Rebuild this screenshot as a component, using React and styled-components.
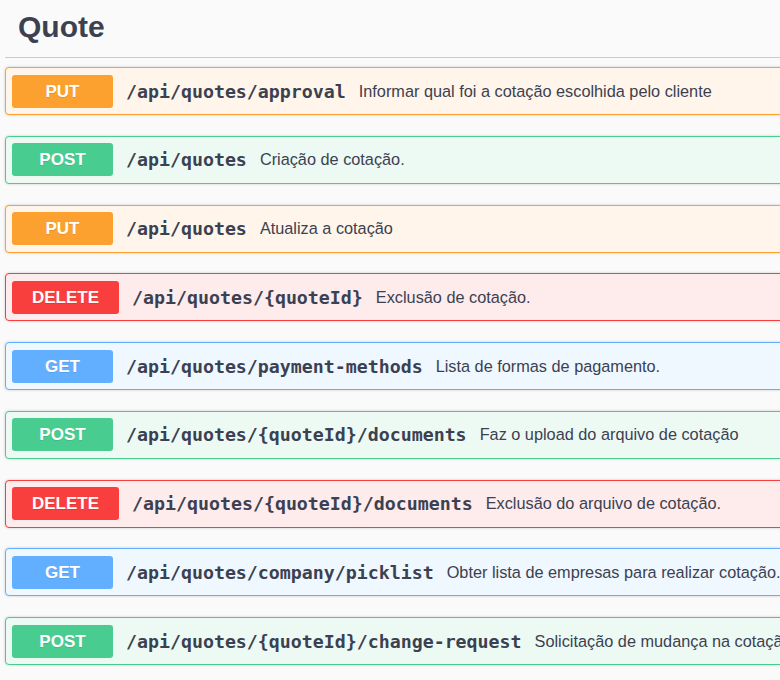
import React from 'react'
import styled, { createGlobalStyle } from 'styled-components'

const operations = [
  { method: 'put', path: '/api/quotes/approval', summary: 'Informar qual foi a cotação escolhida pelo cliente' },
  { method: 'post', path: '/api/quotes', summary: 'Criação de cotação.' },
  { method: 'put', path: '/api/quotes', summary: 'Atualiza a cotação' },
  { method: 'delete', path: '/api/quotes/{quoteId}', summary: 'Exclusão de cotação.' },
  { method: 'get', path: '/api/quotes/payment-methods', summary: 'Lista de formas de pagamento.' },
  { method: 'post', path: '/api/quotes/{quoteId}/documents', summary: 'Faz o upload do arquivo de cotação' },
  { method: 'delete', path: '/api/quotes/{quoteId}/documents', summary: 'Exclusão do arquivo de cotação.' },
  { method: 'get', path: '/api/quotes/company/picklist', summary: 'Obter lista de empresas para realizar cotação.' },
  { method: 'post', path: '/api/quotes/{quoteId}/change-request', summary: 'Solicitação de mudança na cotação' },
]

const colors = {
  put: { main: '#fca130', bg: '#fff5ea' },
  post: { main: '#49cc90', bg: '#edfaf4' },
  delete: { main: '#f93e3e', bg: '#feebeb' },
  get: { main: '#61affe', bg: '#eff7ff' },
}

export default function App() {
  return (
    <>
      <GlobalStyle />
      <Page>
        <TagSection>
          <TagTitle>Quote</TagTitle>
          {operations.map((op, i) => (
            <OpBlock key={i} $method={op.method}>
              <Method $method={op.method}>{op.method.toUpperCase()}</Method>
              <Path>{op.path}</Path>
              <Summary>{op.summary}</Summary>
            </OpBlock>
          ))}
        </TagSection>
      </Page>
    </>
  )
}

///////////////////////////////////////////////////////////////////////////////////

const GlobalStyle = createGlobalStyle`
  html, body {
    margin: 0;
    padding: 0;
    background: #fafafa;
    overflow: hidden;
  }
  * { box-sizing: border-box; }
`

///////////////////////////////////////////////////////////////////////////////////

const Page = styled.div`
  width: 900px;
  padding: 0 0 0 5px;
  font-family: 'Liberation Sans', Arial, sans-serif;
  color: #3b4151;
`

///////////////////////////////////////////////////////////////////////////////////

const TagSection = styled.div`
  display: flex;
  flex-direction: column;
`

///////////////////////////////////////////////////////////////////////////////////

const TagTitle = styled.h3`
  margin: 0 0 9px;
  padding: 10px 20px 13px 13px;
  border-bottom: 1px solid #c9cbd0;
  font-size: 30px;
  font-weight: 700;
  line-height: 34px;
  color: #3b4151;
`

///////////////////////////////////////////////////////////////////////////////////

const OpBlock = styled.div`
  display: flex;
  align-items: center;
  height: 48px;
  margin-bottom: 20.75px;
  padding: 0 6px;
  border: 1px solid ${(p) => colors[p.$method].main};
  border-radius: 4px;
  background: ${(p) => colors[p.$method].bg};
  box-shadow: 0 0 3px rgba(0, 0, 0, 0.19);
  white-space: nowrap;
`

///////////////////////////////////////////////////////////////////////////////////

const Method = styled.span`
  flex-shrink: 0;
  min-width: 101px;
  height: 33px;
  padding: 0 20px;
  border-radius: 3px;
  background: ${(p) => colors[p.$method].main};
  color: #fff;
  font-size: 17px;
  font-weight: 700;
  line-height: 33px;
  text-align: center;
  text-shadow: 0 1px 0 rgba(0, 0, 0, 0.1);
`

///////////////////////////////////////////////////////////////////////////////////

const Path = styled.span`
  flex-shrink: 0;
  padding: 0 13px;
  font-family: 'DejaVu Sans Mono', monospace;
  font-size: 18.25px;
  font-weight: 700;
  color: #3b4151;
`

///////////////////////////////////////////////////////////////////////////////////

const Summary = styled.span`
  font-size: 16.3px;
  color: #3b4151;
`
